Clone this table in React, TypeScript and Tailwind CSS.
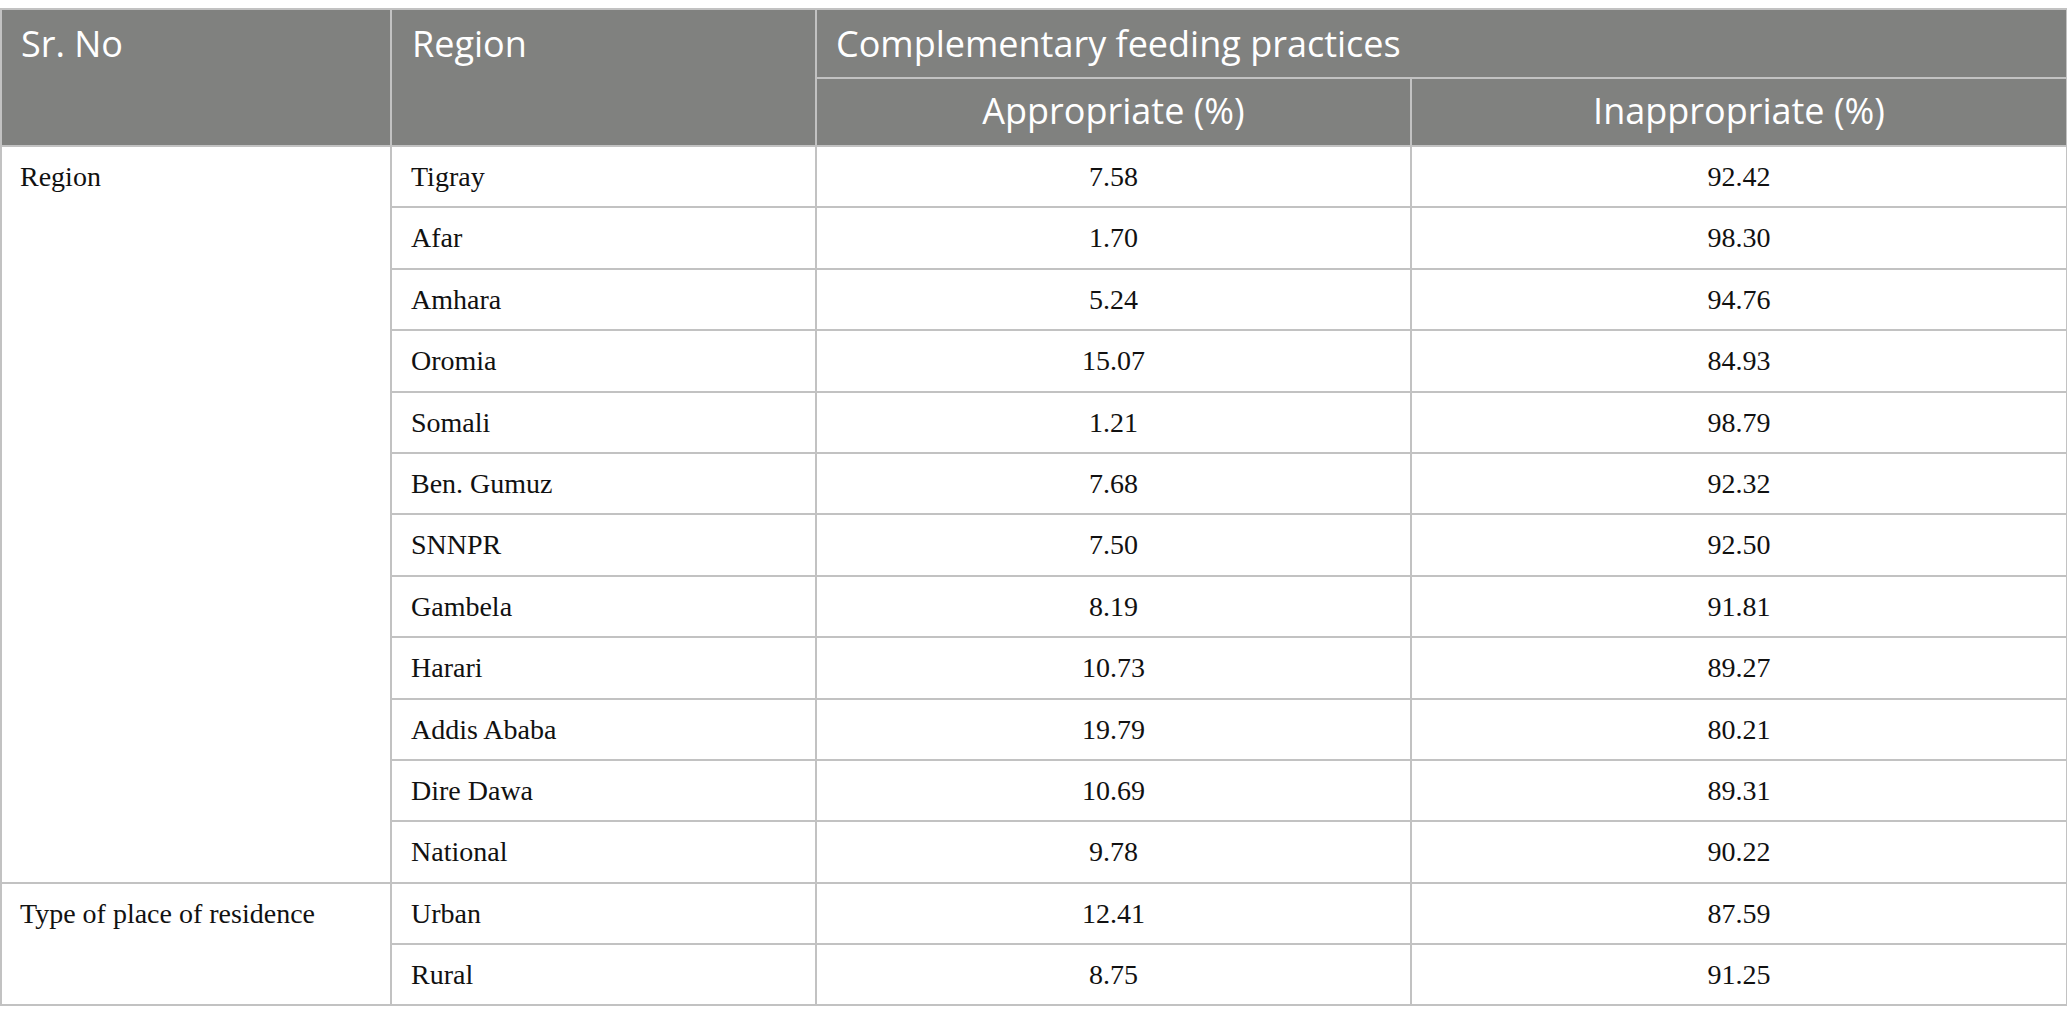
const rows = [
  { group: "Region", span: 12, name: "Tigray", a: "7.58", b: "92.42" },
  { name: "Afar", a: "1.70", b: "98.30" },
  { name: "Amhara", a: "5.24", b: "94.76" },
  { name: "Oromia", a: "15.07", b: "84.93" },
  { name: "Somali", a: "1.21", b: "98.79" },
  { name: "Ben. Gumuz", a: "7.68", b: "92.32" },
  { name: "SNNPR", a: "7.50", b: "92.50" },
  { name: "Gambela", a: "8.19", b: "91.81" },
  { name: "Harari", a: "10.73", b: "89.27" },
  { name: "Addis Ababa", a: "19.79", b: "80.21" },
  { name: "Dire Dawa", a: "10.69", b: "89.31" },
  { name: "National", a: "9.78", b: "90.22" },
  { group: "Type of place of residence", span: 2, name: "Urban", a: "12.41", b: "87.59" },
  { name: "Rural", a: "8.75", b: "91.25" },
];

const head = "border-2 border-[#c2c2c2] bg-[#80817f] text-white font-normal align-top text-[36px] leading-[44px]";
const cell = "border-2 border-[#c2c2c2] align-top text-[28px] leading-[32px] pt-[14px] text-[#111]";

export default function App() {
  return (
    <div className="bg-white w-[2067px] min-h-[1021px] pt-2">
      <table className="border-collapse w-[2066px] table-fixed">
        <colgroup>
          <col className="w-[390px]" />
          <col className="w-[425px]" />
          <col className="w-[595px]" />
          <col className="w-[656px]" />
        </colgroup>
        <thead className="font-['Open_Sans',sans-serif]">
          <tr className="h-[69px]">
            <th rowSpan={2} className={`${head} text-left px-[19px] pt-[12px]`}>Sr. No</th>
            <th rowSpan={2} className={`${head} text-left px-[20px] pt-[12px]`}>Region</th>
            <th colSpan={2} className={`${head} text-left px-[19px] pt-[12px]`}>Complementary feeding practices</th>
          </tr>
          <tr className="h-[68px]">
            <th className={`${head} text-center pt-[10px]`}>Appropriate (%)</th>
            <th className={`${head} text-center pt-[10px]`}>Inappropriate (%)</th>
          </tr>
        </thead>
        <tbody className="font-['Liberation_Serif',serif]">
          {rows.map((r) => (
            <tr key={r.name} className="h-[61.4px]">
              {r.group && (
                <td rowSpan={r.span} className={`${cell} px-[18px]`}>{r.group}</td>
              )}
              <td className={`${cell} px-[19px]`}>{r.name}</td>
              <td className={`${cell} text-center`}>{r.a}</td>
              <td className={`${cell} text-center`}>{r.b}</td>
            </tr>
          ))}
        </tbody>
      </table>
    </div>
  );
}
